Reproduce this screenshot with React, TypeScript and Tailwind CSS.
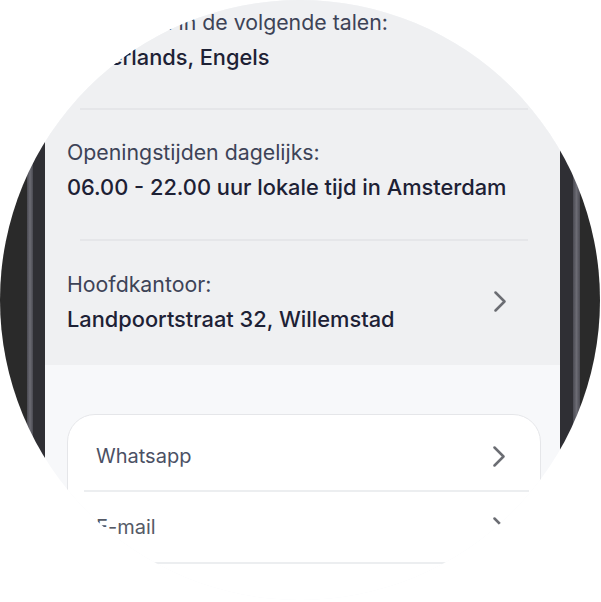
import React from 'react';

const Chevron: React.FC = () => (
  <svg width="12" height="21" viewBox="0 0 12 21" fill="none" className="shrink-0">
    <polyline
      points="1.5,1.5 10.5,10.5 1.5,19.5"
      stroke="#6b6d73"
      strokeWidth="2.5"
      strokeLinecap="round"
      strokeLinejoin="round"
    />
  </svg>
);

const InfoBlock: React.FC<{ label: string; value: string; className?: string; arrow?: boolean }> = ({
  label,
  value,
  className = '',
  arrow,
}) => (
  <div className={`flex items-center justify-between pl-[22px] pr-[54px] ${className}`}>
    <div className="flex flex-col gap-[5px]">
      <div className="text-[21.3px] leading-[30px] text-[#3d4357] whitespace-nowrap">{label}</div>
      <div className="text-[21.8px] leading-[30px] font-medium text-[#1d2135] whitespace-nowrap">{value}</div>
    </div>
    {arrow && <Chevron />}
  </div>
);

const Divider: React.FC = () => <div className="h-[2px] bg-[#e5e6e9] ml-[35px] mr-[32px]" />;

export default function App() {
  return (
    <div className="w-[601px] h-[602px] bg-white font-['Inter',sans-serif] overflow-hidden">
      <div className="w-[600px] h-[600px] rounded-full overflow-hidden flex">
        {/* left phone edge */}
        <div className="w-[45px] shrink-0 flex">
          <div className="w-[27px] bg-[#2a2a2a]" />
          <div className="w-[6px] bg-gradient-to-r from-[#4a4a52] via-[#6c6c74] to-[#4a4a52]" />
          <div className="w-[12px] bg-[#2f2f34]" />
        </div>

        {/* screen */}
        <div className="w-[515px] shrink-0 flex flex-col bg-[#f7f8fa]">
          <div className="bg-[#eff0f2] flex flex-col">
            <InfoBlock
              label="Wij helpen in de volgende talen:"
              value="Nederlands, Engels"
              className="pt-[7px] pb-[36px]"
            />
            <Divider />
            <InfoBlock
              label="Openingstijden dagelijks:"
              value="06.00 - 22.00 uur lokale tijd in Amsterdam"
              className="pt-[27px] pb-[37px]"
            />
            <Divider />
            <InfoBlock
              label="Hoofdkantoor:"
              value="Landpoortstraat 32, Willemstad"
              className="pt-[28px] pb-[31px]"
              arrow
            />
          </div>

          <div className="mt-[49px] ml-[22px] mr-[19px] bg-white border border-[#e5e6e9] rounded-[28px] flex flex-col">
            <div className="flex items-center justify-between pl-[28px] pr-[35px] pt-[26px] pb-[19px]">
              <span className="text-[20px] leading-[30px] text-[#4b5064]">Whatsapp</span>
              <Chevron />
            </div>
            <div className="h-[2px] bg-[#eceef0] ml-[16px] mr-[11px]" />
            <div className="flex items-center justify-between pl-[28px] pr-[35px] pt-[20px] pb-[20px]">
              <span className="text-[20px] leading-[30px] text-[#555a66]">E-mail</span>
              <Chevron />
            </div>
            <div className="h-[2px] bg-[#eceef0] ml-[16px] mr-[11px]" />
            <div className="h-[60px]" />
          </div>
        </div>

        {/* right phone edge */}
        <div className="w-[40px] shrink-0 flex">
          <div className="w-[13px] bg-[#2f2f34]" />
          <div className="w-[7px] bg-gradient-to-r from-[#4a4a52] via-[#6c6c74] to-[#4a4a52]" />
          <div className="flex-1 bg-[#2a2a2a]" />
        </div>
      </div>
    </div>
  );
}
